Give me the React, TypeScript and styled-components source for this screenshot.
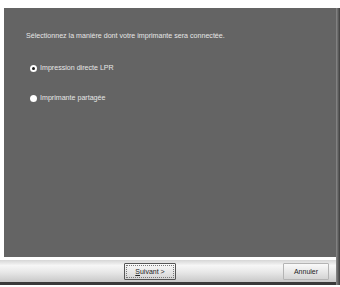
import React from "react";
import styled, { createGlobalStyle } from "styled-components";

const Global = createGlobalStyle`
  html, body { margin: 0; padding: 0; background: #ffffff; }
  body { width: 340px; height: 287px; overflow: hidden; font-family: "Liberation Sans", Arial, sans-serif; }
`;

const Frame = styled.div`
  width: 340px;
  height: 287px;
  display: flex;
  flex-direction: row;
  background: #ffffff;
`;

const Main = styled.div`
  width: 336px;
  display: flex;
  flex-direction: column;
`;

const EdgeStrip = styled.div`
  width: 4px;
  margin-top: 8px;
  height: 277px;
  background: linear-gradient(to right, #8a8a8a, #3c3c3c);
`;

const Panel = styled.div`
  margin: 8px 0 0 4px;
  height: 249px;
  background: #646464;
  color: #e6e6e6;
  font-size: 7.1px;
  padding: 24px 0 0 22px;
  box-sizing: border-box;
  display: flex;
  flex-direction: column;
`;

const Prompt = styled.div`
  line-height: 8px;
  margin-bottom: 24px;
`;

const Option = styled.label`
  display: flex;
  align-items: center;
  gap: 3px;
  height: 8px;
  margin: 0 0 22px 4px;
  line-height: 8px;
`;

const Radio = styled.span<{ $checked?: boolean }>`
  width: 7px;
  height: 7px;
  border-radius: 50%;
  background: radial-gradient(circle, #ffffff 60%, #d0d0d0 100%);
  position: relative;
  &::after {
    content: "";
    display: ${({ $checked }) => ($checked ? "block" : "none")};
    position: absolute;
    left: 2px;
    top: 2px;
    width: 3px;
    height: 3px;
    border-radius: 50%;
    background: #1a1a1a;
  }
`;

const Bar = styled.div`
  margin-top: 3px;
  height: 22px;
  background: linear-gradient(to bottom, #d6d6d6 0%, #f6f6f6 25%, #e8e8e8 55%, #c8c8c8 100%);
  display: flex;
  align-items: center;
  padding: 0 7px 0 124px;
  border-bottom: 3px solid #3a3a3a;
`;

const Button = styled.button<{ $focus?: boolean }>`
  height: 17px;
  width: ${({ $focus }) => ($focus ? "52px" : "46px")};
  font-family: "Liberation Sans", Arial, sans-serif;
  font-size: 7px;
  color: #222;
  padding: 0;
  background: linear-gradient(to bottom, #fafafa, #e4e4e4 60%, #d4d4d4);
  border: 1px solid ${({ $focus }) => ($focus ? "#555" : "#b4b4b4")};
  border-radius: 1px;
  outline: ${({ $focus }) => ($focus ? "1px dotted #777" : "none")};
  outline-offset: -3px;
`;

const Spacer = styled.div`
  flex: 1;
`;

export default function App() {
  return (
    <>
      <Global />
      <Frame>
        <Main>
          <Panel>
            <Prompt>Sélectionnez la manière dont votre imprimante sera connectée.</Prompt>
            <Option>
              <Radio $checked />
              Impression directe LPR
            </Option>
            <Option>
              <Radio />
              Imprimante partagée
            </Option>
          </Panel>
          <Bar>
            <Button $focus>
              <u>S</u>uivant &gt;
            </Button>
            <Spacer />
            <Button>Annuler</Button>
          </Bar>
        </Main>
        <EdgeStrip />
      </Frame>
    </>
  );
}
